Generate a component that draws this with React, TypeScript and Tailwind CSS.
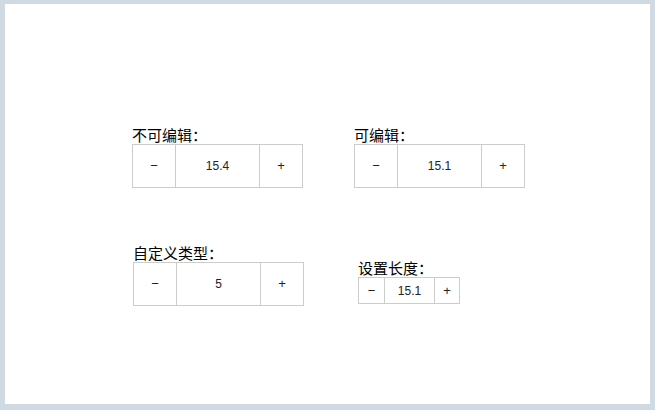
import React from "react";

const cjk = { fontFamily: '"Noto Sans CJK SC", "Noto Sans", sans-serif' };
const num = { fontFamily: '"Liberation Sans", Arial, sans-serif' };

function Big({ value }: { value: string }) {
  return (
    <div className="flex h-[44px] w-[171px] border border-[#cccccc] bg-white text-[12px] text-[#222222]" style={num}>
      <div className="flex w-[43px] items-center justify-center border-r border-[#cccccc] text-[13px]">−</div>
      <div className="flex w-[84px] items-center justify-center border-r border-[#cccccc]">{value}</div>
      <div className="flex flex-1 items-center justify-center text-[13px]">+</div>
    </div>
  );
}

function Small({ value }: { value: string }) {
  return (
    <div className="flex h-[27px] w-[102px] border border-[#cccccc] bg-white text-[12px] text-[#222222]" style={num}>
      <div className="flex w-[26px] items-center justify-center border-r border-[#cccccc] text-[13px]">−</div>
      <div className="flex w-[50px] items-center justify-center border-r border-[#cccccc]">{value}</div>
      <div className="flex flex-1 items-center justify-center text-[13px]">+</div>
    </div>
  );
}

function Label({ text }: { text: string }) {
  return (
    <div className="h-[19px] text-[15px] leading-[19px] text-[#000000]" style={cjk}>
      {text}
    </div>
  );
}

export default function App() {
  return (
    <div className="h-[410px] w-[655px] bg-[#cfdae2] pt-[4px] pl-[5px]">
      <div className="h-[400px] w-[645px] bg-white pt-[121px] pl-[127px]">
        <div className="flex">
          <div className="w-[222px]">
            <Label text="不可编辑：" />
            <Big value="15.4" />
          </div>
          <div>
            <Label text="可编辑：" />
            <Big value="15.1" />
          </div>
        </div>
        <div className="mt-[55px] flex">
          <div className="ml-px w-[221px]">
            <Label text="自定义类型：" />
            <Big value="5" />
          </div>
          <div className="ml-[4px] mt-[15px]">
            <Label text="设置长度：" />
            <Small value="15.1" />
          </div>
        </div>
      </div>
    </div>
  );
}
